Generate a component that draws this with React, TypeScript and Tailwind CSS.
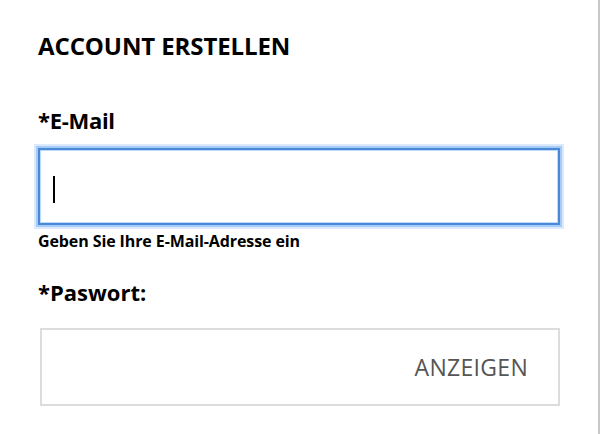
export default function App() {
  return (
    <div className="h-[434px] w-[602px] overflow-hidden bg-white font-['Open_Sans',sans-serif] text-black">
      <div className="h-full w-[600px] border-r-2 border-[#c8c8c8] pl-[38px] pt-[30px]">
        <h1 className="text-[24px] font-bold leading-[32px] tracking-[-0.1px]">ACCOUNT ERSTELLEN</h1>
        <label className="mt-[43px] block text-[22px] font-bold leading-[30px] tracking-[-0.3px]">*E-Mail</label>
        <div className="ml-[2px] mt-[15px] flex h-[73px] w-[518px] items-start border border-[#bcd8fa] pl-[12px] pt-[25px] shadow-[0_0_0_2px_#4a88d8,0_0_0_4px_#a6cbf7,0_0_0_6px_#dbeafd]">
          <div className="h-[27px] w-[2px] bg-black" />
        </div>
        <p className="mt-[8px] text-[16px] font-bold leading-[20px] tracking-[-0.1px]">Geben Sie Ihre E-Mail-Adresse ein</p>
        <label className="mt-[26px] block text-[22px] font-bold leading-[30px]">*Paswort:</label>
        <div className="ml-[2px] mt-[21px] flex h-[78px] w-[520px] items-center justify-end border-2 border-[#dcdcdc] pr-[30px]">
          <span className="text-[23px] leading-none tracking-[0.3px] text-[#555]">ANZEIGEN</span>
        </div>
      </div>
    </div>
  );
}
